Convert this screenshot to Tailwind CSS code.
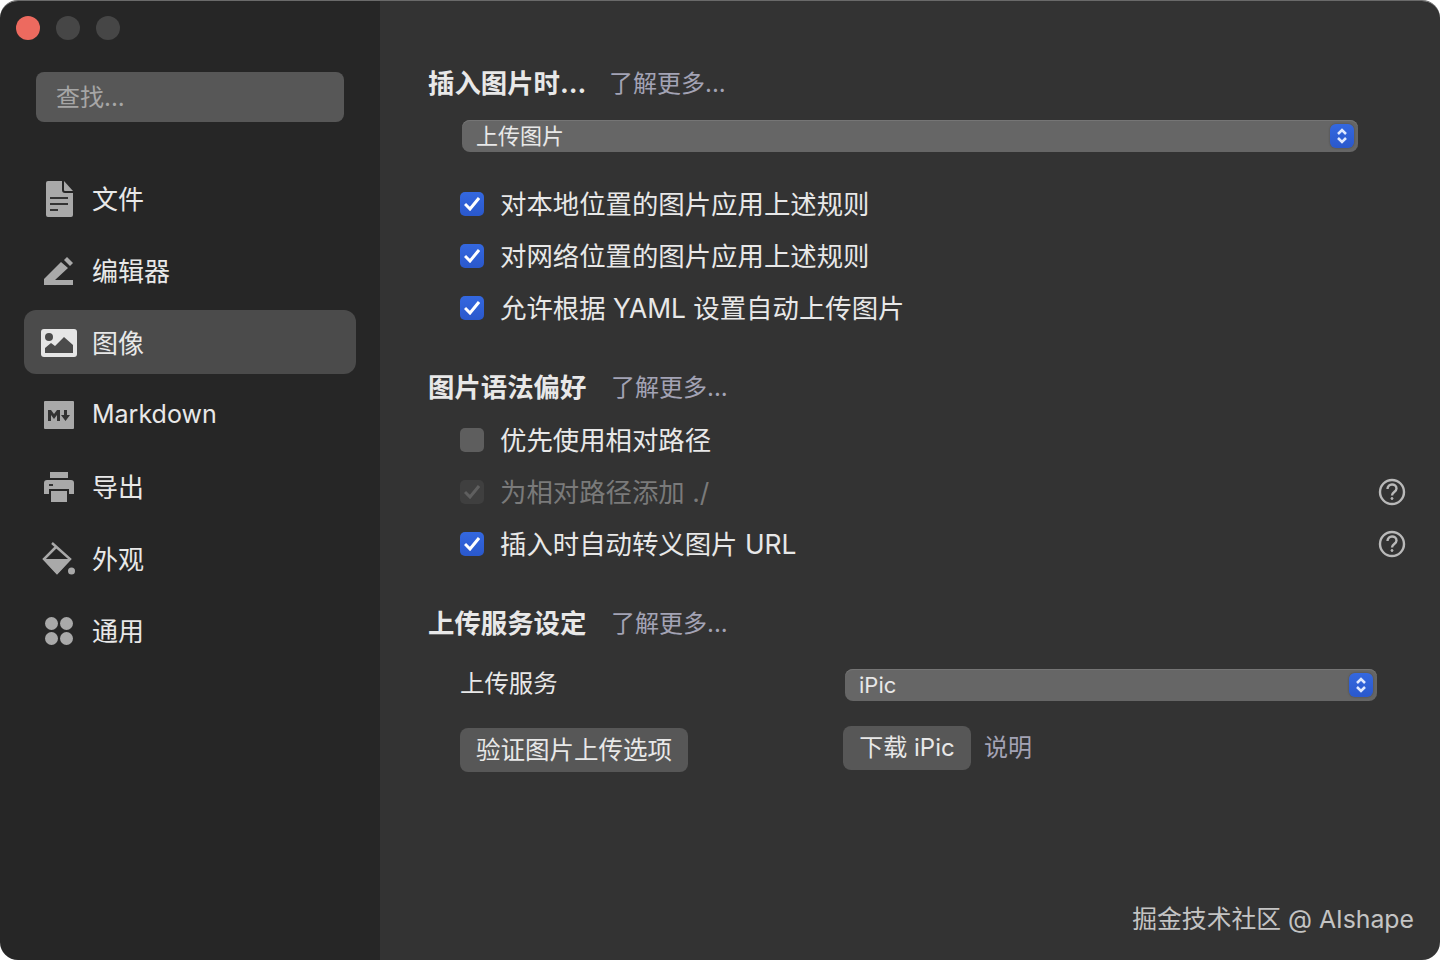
<!DOCTYPE html>
<html lang="zh-CN">
  <head>
    <meta charset="UTF-8" />
    <title>偏好设置</title>
    <script src="https://cdn.jsdelivr.net/npm/@tailwindcss/browser@4"></script>
  </head>
  <body class="bg-white font-['Inter','Noto_Sans_CJK_SC',sans-serif] text-[#e8e8e8] overflow-hidden">
    <div class="relative flex w-[1440px] h-[960px] rounded-[18px] overflow-hidden border-t border-[#6a6a6a]">
      <!-- Sidebar -->
      <aside class="w-[380px] shrink-0 bg-[#262626]">
        <div class="flex gap-[16px] pl-[16px] pt-[15px]">
          <span class="w-[24px] h-[24px] rounded-full bg-[#ed6a5f]"></span>
          <span class="w-[24px] h-[24px] rounded-full bg-[#464646]"></span>
          <span class="w-[24px] h-[24px] rounded-full bg-[#464646]"></span>
        </div>
        <div class="mt-[32px] ml-[36px] w-[308px] h-[50px] rounded-[8px] bg-[#575757] flex items-center pl-[20px] pt-[2px] text-[24px] text-[#a6a6a6]">查找...</div>

        <nav class="mt-[44px] mx-[24px]">
          <div class="flex items-center h-[64px] mb-[8px] pt-[2px]">
            <span class="w-[68px] pl-[2px] flex justify-center">
              <svg class="w-[28px] h-[36px]" viewBox="0 0 28 36"><path fill="#a9a9a9" d="M3 0h14v9a3 3 0 0 0 3 3h8v22a2 2 0 0 1-2 2H3a2 2 0 0 1-2-2V2a2 2 0 0 1 2-2z"/><path fill="#a9a9a9" d="M19 0l9 10h-8a1 1 0 0 1-1-1z"/><path stroke="#333" stroke-width="2" d="M5 17h18M5 23h18M5 29h8"/></svg>
            </span>
            <span class="text-[26px]">文件</span>
          </div>
          <div class="flex items-center h-[64px] mb-[8px] pt-[2px]">
            <span class="w-[68px] pl-[2px] flex justify-center">
              <svg class="w-[30px] h-[28px]" viewBox="0 0 30 28"><path fill="#a9a9a9" d="M0 22 17 5l7 6-13 12h18v5H0z"/><path fill="#a9a9a9" d="M20 3l3-3 6 6-3 3z"/></svg>
            </span>
            <span class="text-[26px]">编辑器</span>
          </div>
          <div class="flex items-center h-[64px] mb-[8px] pt-[2px] rounded-[12px] bg-[#4b4b4b]">
            <span class="w-[68px] pl-[2px] flex justify-center">
              <svg class="w-[36px] h-[28px]" viewBox="0 0 36 28"><rect width="36" height="28" rx="3" fill="#e6e6e6"/><circle cx="8" cy="8" r="4" fill="#4b4b4b"/><path fill="#4b4b4b" d="M4 24v-5l6-5 4 3 9-9 9 8v8z"/></svg>
            </span>
            <span class="text-[26px]">图像</span>
          </div>
          <div class="flex items-center h-[64px] mb-[8px] pt-[2px]">
            <span class="w-[68px] pl-[2px] flex justify-center">
              <svg class="w-[30px] h-[28px]" viewBox="0 0 30 28"><rect width="30" height="28" rx="1" fill="#a9a9a9"/><path fill="#333" d="M4 20V9h3l3 4 3-4h3v11h-3v-6l-3 4-3-4v6z"/><path fill="#333" d="M20 9h3v5h3l-4.500 6-4.500-6h3z"/></svg>
            </span>
            <span class="text-[25px]">Markdown</span>
          </div>
          <div class="flex items-center h-[64px] mb-[8px] pt-[2px]">
            <span class="w-[68px] pl-[2px] flex justify-center">
              <svg class="w-[30px] h-[30px]" viewBox="0 0 30 30"><path fill="#a9a9a9" d="M6 0h18v6H6z"/><path fill="#a9a9a9" d="M3 8h24a3 3 0 0 1 3 3v11h-5v-5H5v5H0V11a3 3 0 0 1 3-3z"/><path fill="#a9a9a9" d="M7 19h16v11H7z"/><path fill="#333" d="M5 12h4v2H5z"/></svg>
            </span>
            <span class="text-[26px]">导出</span>
          </div>
          <div class="flex items-center h-[64px] mb-[8px] pt-[2px]">
            <span class="w-[68px] pl-[2px] flex justify-center">
              <svg class="w-[34px] h-[34px]" viewBox="0 0 34 34"><path fill="#a9a9a9" d="M1 17 15 32l14-15H1z"/><path fill="none" stroke="#a9a9a9" stroke-width="2.500" d="M10 1l18 16-13 14L2 17 14 5"/><circle cx="29.500" cy="29" r="3.500" fill="#a9a9a9"/></svg>
            </span>
            <span class="text-[26px]">外观</span>
          </div>
          <div class="flex items-center h-[64px] pt-[2px]">
            <span class="w-[68px] pl-[2px] flex justify-center">
              <svg class="w-[28px] h-[28px]" viewBox="0 0 28 28" fill="#a9a9a9"><circle cx="6.500" cy="6.500" r="6.500"/><circle cx="21.500" cy="6.500" r="6.500"/><circle cx="6.500" cy="21.500" r="6.500"/><circle cx="21.500" cy="21.500" r="6.500"/></svg>
            </span>
            <span class="text-[26px]">通用</span>
          </div>
        </nav>
      </aside>

      <!-- Settings pane -->
      <main class="flex-1 bg-[#333333] pl-[48px] pr-[34px] pt-[62px]">
        <div class="flex items-center h-[40px]">
          <h2 class="text-[26.4px] pt-[2px] font-bold w-[181px]">插入图片时...</h2>
          <a class="text-[24px] pt-[2px] text-[#a3a3b5]">了解更多...</a>
        </div>
        <div class="relative mt-[17px] ml-[34px] w-[896px] h-[32px] rounded-[8px] bg-[#666666] shadow-[inset_0_1px_0_#757575] flex items-center pl-[14px] text-[22px]">
          上传图片
          <span class="absolute right-[4px] top-[4px] w-[24px] h-[24px] rounded-[6px] bg-linear-to-b from-[#3468e0] to-[#2a58cc] shadow-[0_0_2px_#444] flex items-center justify-center">
            <svg class="w-[12px] h-[18px]" viewBox="0 0 12 18" fill="none" stroke="#dfe8ff" stroke-width="2.500"><path d="M2 7l4-4 4 4M2 11l4 4 4-4"/></svg>
          </span>
        </div>

        <div class="mt-[26px] pl-[32px]">
          <div class="flex items-center h-[52px]">
            <span class="w-[24px] h-[24px] rounded-[5px] bg-linear-to-b from-[#3468e0] to-[#2a58cc] flex items-center justify-center mr-[16px]">
              <svg class="w-[16px] h-[14px]" viewBox="0 0 16 14" fill="none" stroke="#fff" stroke-width="3"><path d="M1 7l5 5 9-11"/></svg>
            </span>
            <span class="text-[26.4px] pt-[2px]">对本地位置的图片应用上述规则</span>
          </div>
          <div class="flex items-center h-[52px]">
            <span class="w-[24px] h-[24px] rounded-[5px] bg-linear-to-b from-[#3468e0] to-[#2a58cc] flex items-center justify-center mr-[16px]">
              <svg class="w-[16px] h-[14px]" viewBox="0 0 16 14" fill="none" stroke="#fff" stroke-width="3"><path d="M1 7l5 5 9-11"/></svg>
            </span>
            <span class="text-[26.4px] pt-[2px]">对网络位置的图片应用上述规则</span>
          </div>
          <div class="flex items-center h-[52px]">
            <span class="w-[24px] h-[24px] rounded-[5px] bg-linear-to-b from-[#3468e0] to-[#2a58cc] flex items-center justify-center mr-[16px]">
              <svg class="w-[16px] h-[14px]" viewBox="0 0 16 14" fill="none" stroke="#fff" stroke-width="3"><path d="M1 7l5 5 9-11"/></svg>
            </span>
            <span class="text-[26.4px] pt-[2px]">允许根据 YAML 设置自动上传图片</span>
          </div>
        </div>

        <div class="flex items-center h-[40px] mt-[33px]">
          <h2 class="text-[26.4px] pt-[2px] font-bold w-[183px]">图片语法偏好</h2>
          <a class="text-[24px] pt-[2px] text-[#a3a3b5]">了解更多...</a>
        </div>

        <div class="mt-[7px] pl-[32px]">
          <div class="flex items-center h-[52px]">
            <span class="w-[24px] h-[24px] rounded-[5px] bg-[#5e5e5e] mr-[16px]"></span>
            <span class="text-[26.4px] pt-[2px]">优先使用相对路径</span>
          </div>
          <div class="flex items-center h-[52px]">
            <span class="w-[24px] h-[24px] rounded-[5px] bg-[#3f3f3f] flex items-center justify-center mr-[16px]">
              <svg class="w-[16px] h-[14px]" viewBox="0 0 16 14" fill="none" stroke="#5f5f5f" stroke-width="3"><path d="M1 7l5 5 9-11"/></svg>
            </span>
            <span class="text-[26.4px] pt-[2px] text-[#7a7a7a]">为相对路径添加 ./</span>
            <svg class="ml-auto w-[28px] h-[28px]" viewBox="0 0 28 28" fill="none" stroke="#b9b9b9" stroke-width="2.400"><circle cx="14" cy="14" r="12"/><path d="M9.500 11c0-6 9-6 9-.5 0 3.500-4.500 3.500-4.500 7"/><circle cx="14" cy="20.500" r="1" fill="#b9b9b9" stroke-width="1"/></svg>
          </div>
          <div class="flex items-center h-[52px]">
            <span class="w-[24px] h-[24px] rounded-[5px] bg-linear-to-b from-[#3468e0] to-[#2a58cc] flex items-center justify-center mr-[16px]">
              <svg class="w-[16px] h-[14px]" viewBox="0 0 16 14" fill="none" stroke="#fff" stroke-width="3"><path d="M1 7l5 5 9-11"/></svg>
            </span>
            <span class="text-[26.4px] pt-[2px]">插入时自动转义图片 URL</span>
            <svg class="ml-auto w-[28px] h-[28px]" viewBox="0 0 28 28" fill="none" stroke="#b9b9b9" stroke-width="2.400"><circle cx="14" cy="14" r="12"/><path d="M9.500 11c0-6 9-6 9-.5 0 3.500-4.500 3.500-4.500 7"/><circle cx="14" cy="20.500" r="1" fill="#b9b9b9" stroke-width="1"/></svg>
          </div>
        </div>

        <div class="flex items-center h-[40px] mt-[33px]">
          <h2 class="text-[26.4px] pt-[2px] font-bold w-[183px]">上传服务设定</h2>
          <a class="text-[24px] pt-[2px] text-[#a3a3b5]">了解更多...</a>
        </div>

        <div class="grid grid-cols-[385px_532px] pl-[32px] mt-[26px]">
          <span class="text-[24.4px] leading-[28px]">上传服务</span>
          <div class="relative h-[32px] rounded-[8px] bg-[#666666] shadow-[inset_0_1px_0_#757575] flex items-center pl-[14px] text-[22px]">
            iPic
            <span class="absolute right-[4px] top-[4px] w-[24px] h-[24px] rounded-[6px] bg-linear-to-b from-[#3468e0] to-[#2a58cc] shadow-[0_0_2px_#444] flex items-center justify-center">
              <svg class="w-[12px] h-[18px]" viewBox="0 0 12 18" fill="none" stroke="#dfe8ff" stroke-width="2.500"><path d="M2 7l4-4 4 4M2 11l4 4 4-4"/></svg>
            </span>
          </div>
          <button class="mt-[27px] w-[228px] h-[44px] rounded-[8px] bg-[#575757] text-[24.5px] leading-none">验证图片上传选项</button>
          <div class="flex items-center mt-[25px] h-[44px]">
            <button class="ml-[-2px] w-[128px] h-[44px] rounded-[8px] bg-[#575757] text-[24px] leading-none">下载 iPic</button>
            <a class="ml-[13px] text-[24px] text-[#a3a3b5]">说明</a>
          </div>
        </div>
      </main>

      <!-- Watermark -->
      <span class="absolute right-[26px] bottom-[23px] text-[24.8px] leading-[36px] text-[#c4c4c4]">掘金技术社区 @ AIshape</span>
    </div>
  </body>
</html>
